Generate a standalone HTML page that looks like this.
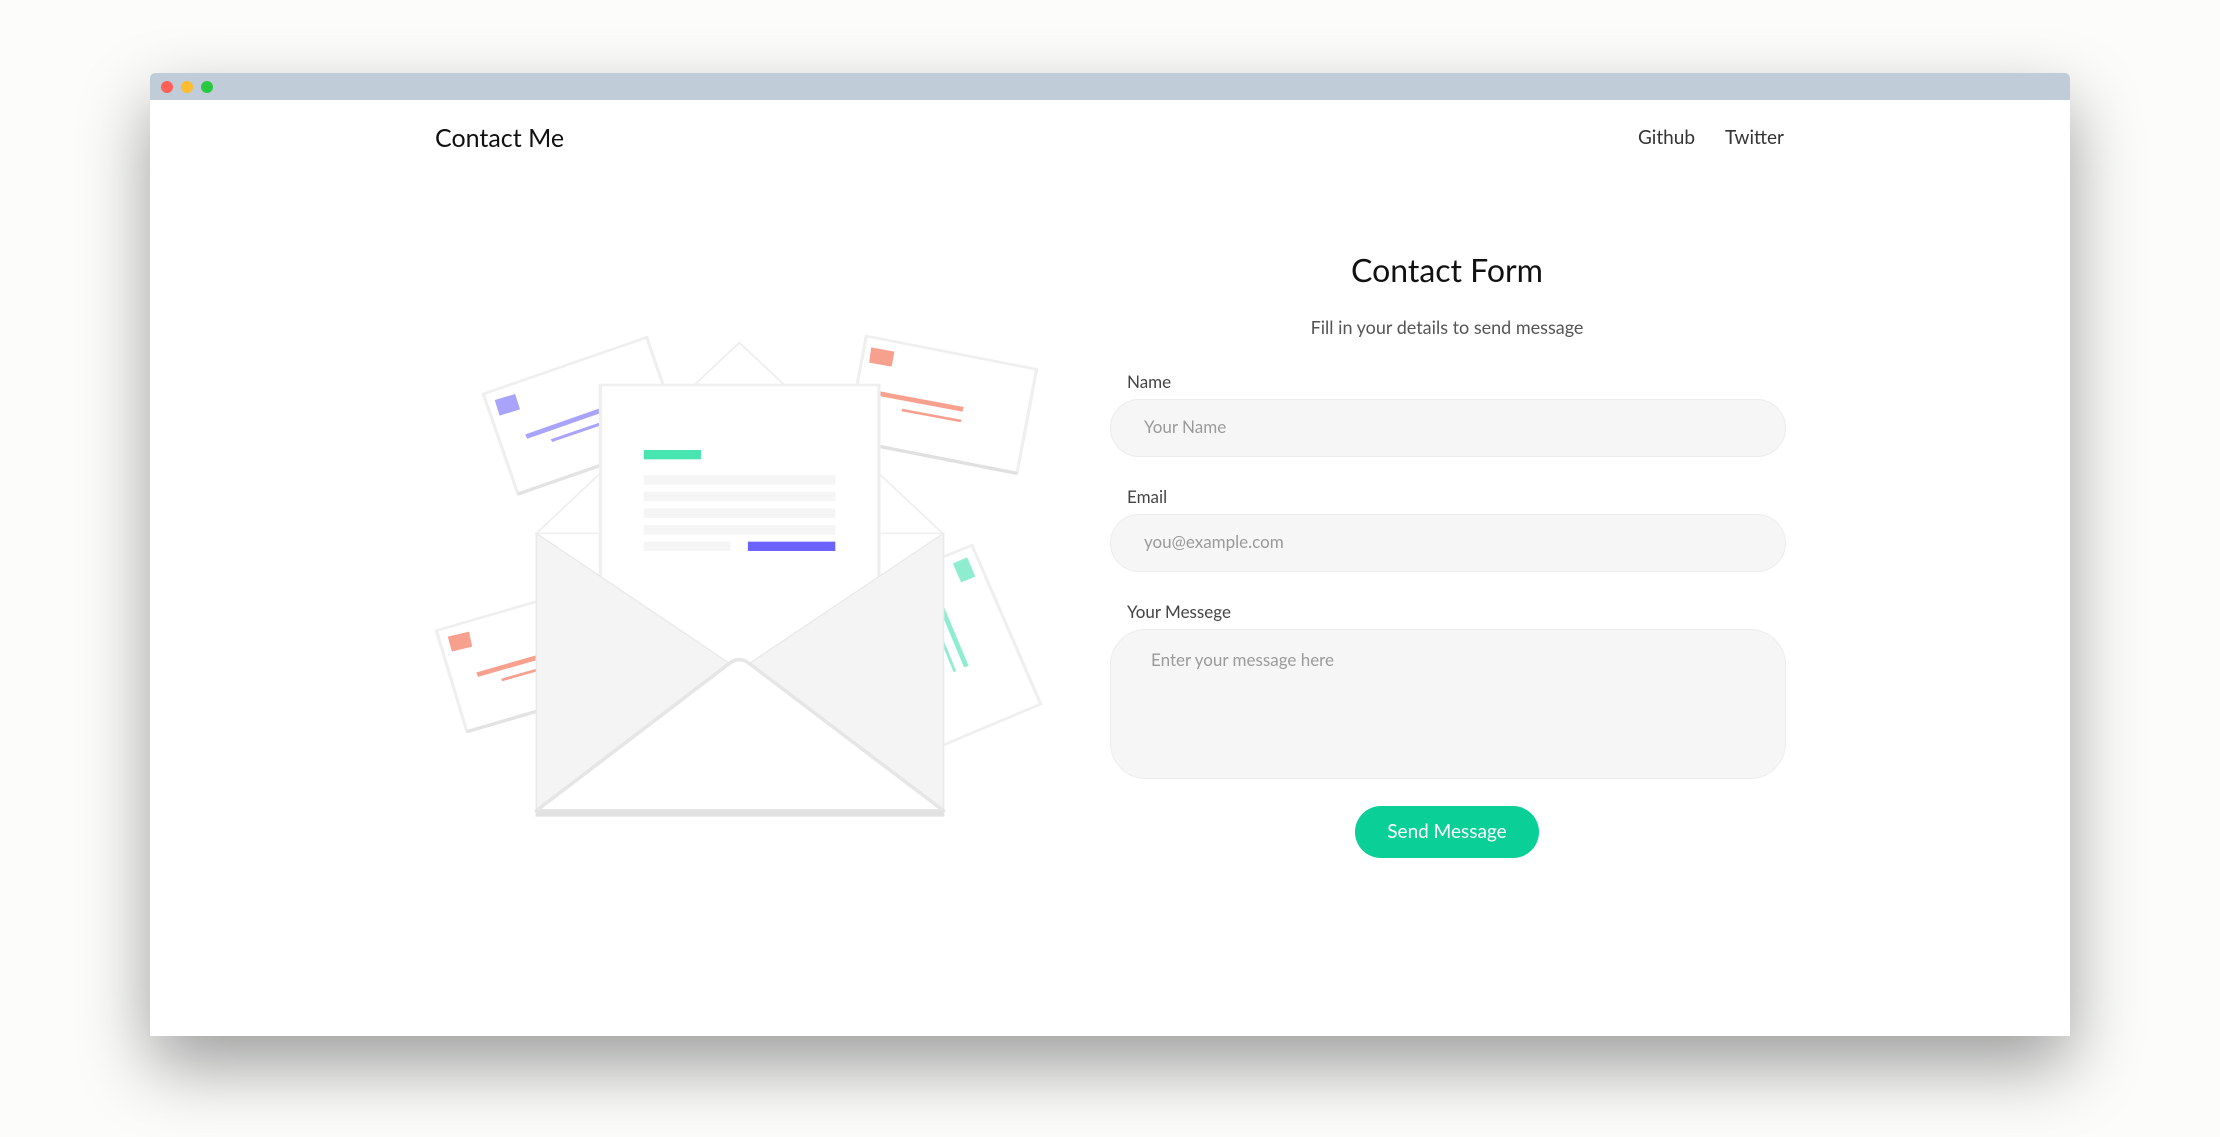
<!DOCTYPE html>
<html><head><meta charset="utf-8"><style>
html,body{margin:0;padding:0;width:2220px;height:1137px;background:#fcfdfb;overflow:hidden;font-family:"Lato","Liberation Sans",sans-serif;}
.win{position:absolute;left:150px;top:73px;width:1920px;height:963px;background:#fff;box-shadow:0 30px 70px rgba(0,0,0,0.38);border-radius:5px 5px 0 0;}
.bar{position:absolute;left:0;top:0;width:100%;height:27px;background:#c0cdd8;border-radius:5px 5px 0 0;}
.dot{position:absolute;top:8px;width:12px;height:12px;border-radius:50%;}
.t{position:absolute;white-space:nowrap;}
.inp{position:absolute;left:1110px;width:674px;background:#f6f6f6;border:1px solid #ececec;border-radius:30px;}
.ph{position:absolute;color:#9a9a9a;font-size:17px;white-space:nowrap;}
.lbl{position:absolute;left:1127px;color:#444;font-size:17px;}
</style></head><body>
<div class="win">
 <div class="bar">
  <div class="dot" style="left:11px;background:#fe5f57"></div>
  <div class="dot" style="left:31px;background:#febc2e"></div>
  <div class="dot" style="left:51px;background:#28c840"></div>
 </div>
</div>
<div class="t" style="left:435px;top:123px;font-size:25px;color:#111;">Contact Me</div>
<div class="t" style="left:1638px;top:126px;font-size:19px;color:#333;">Github</div>
<div class="t" style="left:1725px;top:126px;font-size:19px;color:#333;">Twitter</div>

<div class="t" style="left:1197px;width:500px;text-align:center;top:250px;font-size:32px;color:#111;">Contact Form</div>
<div class="t" style="left:1197px;width:500px;text-align:center;top:316px;font-size:18px;color:#555;">Fill in your details to send message</div>

<div class="lbl" style="top:371px;">Name</div>
<div class="inp" style="top:399px;height:56px;"></div>
<div class="ph" style="left:1144px;top:416px;">Your Name</div>

<div class="lbl" style="top:486px;">Email</div>
<div class="inp" style="top:514px;height:56px;"></div>
<div class="ph" style="left:1144px;top:531px;">you@example.com</div>

<div class="lbl" style="top:601px;">Your Messege</div>
<div class="inp" style="top:629px;height:148px;border-radius:36px;"></div>
<div class="ph" style="left:1151px;top:649px;">Enter your message here</div>

<div style="position:absolute;left:1355px;top:806px;width:184px;height:52px;border-radius:26px;background:#0acf97;color:#fff;font-size:19px;text-align:center;line-height:52px;">Send Message</div>

<svg style="position:absolute;left:420px;top:320px" width="784" height="510" viewBox="0 0 1920 1530" preserveAspectRatio="none">
 <polygon points="155,222 555,52 640,352 240,522" fill="#fff" stroke="#efefef" stroke-width="8"/>
 <line x1="240" y1="522" x2="640" y2="352" stroke="#e3e3e3" stroke-width="10"/>
 <polygon points="183,240 233,222 245,268 195,287" fill="#a9a3fc"/>
 <line x1="260" y1="350" x2="460" y2="264" stroke="#a9a3fc" stroke-width="14"/>
 <line x1="322" y1="362" x2="460" y2="304" stroke="#a9a3fc" stroke-width="9"/>
 <polygon points="1093,48 1510,148 1462,460 1045,360" fill="#fff" stroke="#efefef" stroke-width="8"/>
 <line x1="1045" y1="360" x2="1462" y2="460" stroke="#e0e0e0" stroke-width="10"/>
 <polygon points="1105,82 1162,95 1155,140 1100,128" fill="#f8a08e"/>
 <line x1="1125" y1="221" x2="1330" y2="268" stroke="#f8a08e" stroke-width="14"/>
 <line x1="1180" y1="270" x2="1325" y2="303" stroke="#f8a08e" stroke-width="8"/>
 <polygon points="40,932 320,832 395,1135 115,1235" fill="#fff" stroke="#efefef" stroke-width="8"/>
 <line x1="115" y1="1235" x2="395" y2="1135" stroke="#e3e3e3" stroke-width="10"/>
 <polygon points="68,950 120,935 128,980 78,995" fill="#f8a08e"/>
 <line x1="140" y1="1064" x2="300" y2="1008" stroke="#f8a08e" stroke-width="14"/>
 <line x1="200" y1="1080" x2="300" y2="1045" stroke="#f8a08e" stroke-width="8"/>
 <polygon points="1120,790 1352,676 1520,1152 1282,1275" fill="#fff" stroke="#efefef" stroke-width="8"/>
 <polygon points="1305,730 1340,712 1360,770 1325,787" fill="#8eedcf"/>
 <line x1="1275" y1="855" x2="1338" y2="1040" stroke="#8eedcf" stroke-width="12"/>
 <line x1="1275" y1="950" x2="1310" y2="1055" stroke="#8eedcf" stroke-width="7"/>
 <polygon points="285,640 782,68 1280,640" fill="#fff" stroke="#efefef" stroke-width="5"/>
 <rect x="442" y="195" width="682" height="1100" fill="#fff" stroke="#efefef" stroke-width="8"/>
 <rect x="548" y="390" width="140" height="28" fill="#48e5b0"/>
 <rect x="548" y="465" width="469" height="29" fill="#f5f5f5"/>
 <rect x="548" y="515" width="469" height="29" fill="#f5f5f5"/>
 <rect x="548" y="565" width="469" height="29" fill="#f5f5f5"/>
 <rect x="548" y="615" width="469" height="29" fill="#f5f5f5"/>
 <rect x="548" y="665" width="212" height="28" fill="#f5f5f5"/>
 <rect x="803" y="665" width="214" height="28" fill="#6c63ff"/>
 <polygon points="285,640 770,1040 285,1472" fill="#f4f4f4" stroke="#eaeaea" stroke-width="4"/>
 <polygon points="1282,640 795,1040 1282,1472" fill="#f4f4f4" stroke="#eaeaea" stroke-width="4"/>
 <path d="M285,1472 L758,1030 Q782,1008 806,1030 L1282,1472 Z" fill="#fff" stroke="#e6e6e6" stroke-width="10" stroke-linejoin="round"/>
 <rect x="283" y="1470" width="1001" height="20" fill="#e2e2e2"/>
</svg>
</body></html>
